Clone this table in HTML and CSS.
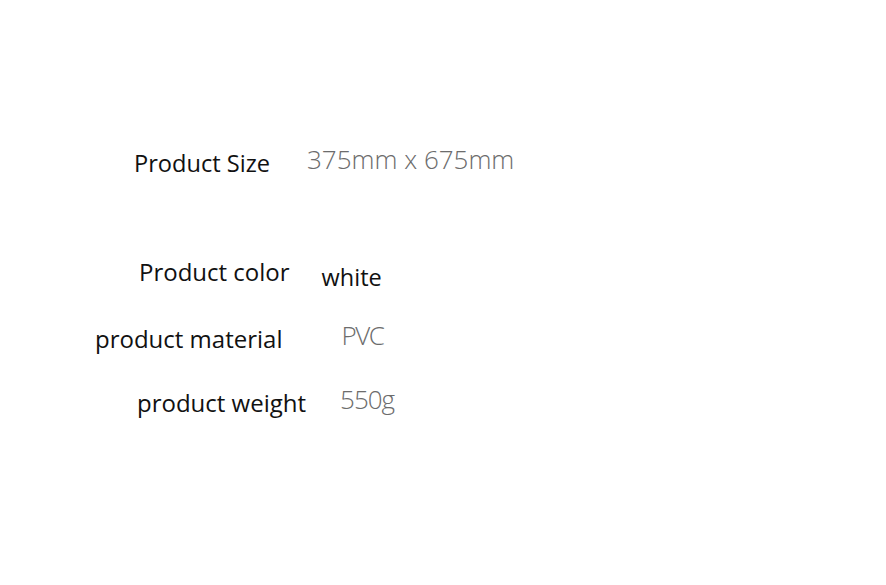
FILE: index.html
```html
<!DOCTYPE html>
<html>
<head>
<meta charset="utf-8">
<link rel="stylesheet" href="styles.css">
</head>
<body>
<div class="sheet">
  <div class="row row-size">
    <span class="label label-size">Product Size</span>
    <span class="value value-size">375mm x 675mm</span>
  </div>
  <div class="row row-color">
    <span class="label">Product color</span>
    <span class="value-dark">white</span>
  </div>
  <div class="row row-material">
    <span class="label">product material</span>
    <span class="value value-material">PVC</span>
  </div>
  <div class="row row-weight">
    <span class="label">product weight</span>
    <span class="value value-weight">550g</span>
  </div>
</div>
</body>
</html>
```

FILE: styles.css
```css
html, body {
  margin: 0;
  padding: 0;
  background: #ffffff;
}
.sheet {
  width: 886px;
  height: 585px;
  display: flex;
  flex-direction: column;
  padding-top: 146px;
  box-sizing: border-box;
}
.row {
  display: flex;
  align-items: baseline;
  white-space: nowrap;
  line-height: 32px;
}
.label {
  font-family: "Open Sans", "Noto Sans", sans-serif;
  font-size: 24px;
  color: #111111;
}
.label-size {
  font-size: 23.6px;
}
.value {
  font-family: "Open Sans", "Noto Sans", sans-serif;
  font-weight: 300;
  font-size: 26px;
  color: #6c6c6c;
}
.value-dark {
  font-family: "Open Sans", "Noto Sans", sans-serif;
  font-size: 23.5px;
  color: #111111;
}
.row-size {
  padding-left: 134px;
  gap: 37px;
}
.value-size {
  position: relative;
  top: -3px;
}
.row-color {
  padding-left: 139px;
  margin-top: 77px;
  gap: 32px;
}
.row-color .value-dark {
  position: relative;
  top: 5px;
}
.row-material {
  padding-left: 95px;
  margin-top: 34px;
  gap: 59px;
}
.value-material {
  letter-spacing: -1.5px;
  position: relative;
  top: -3px;
}
.row-weight {
  padding-left: 137px;
  margin-top: 31px;
  gap: 34px;
}
.value-weight {
  letter-spacing: -1px;
  position: relative;
  top: -3px;
}
```
